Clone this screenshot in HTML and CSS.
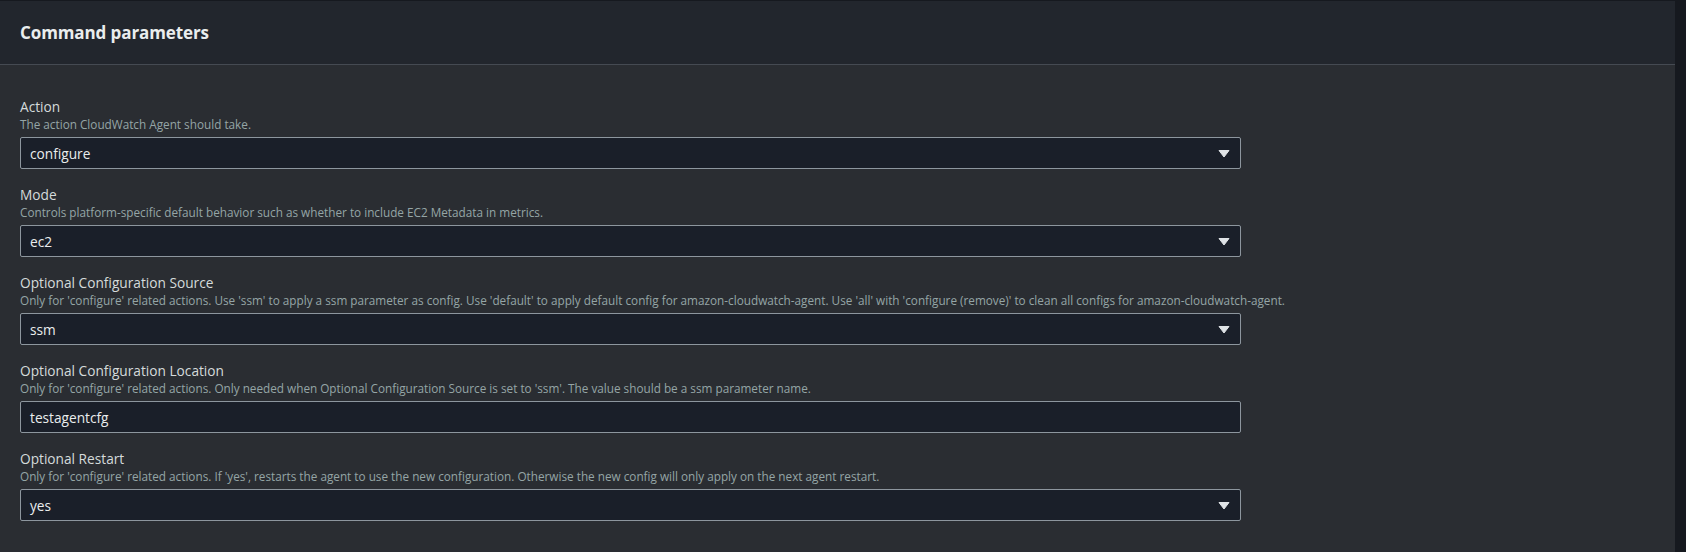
FILE: index.html
```html
<!DOCTYPE html>
<html lang="en">
<head>
<meta charset="utf-8">
<title>Command parameters</title>
<link rel="stylesheet" href="styles.css">
</head>
<body>
<div class="page">
  <section class="panel">
    <header class="panel-header">
      <h2 class="panel-title">Command parameters</h2>
    </header>
    <div class="panel-body">
      <div class="field">
        <div class="field-label">Action</div>
        <div class="field-desc">The action CloudWatch Agent should take.</div>
        <div class="control select">
          <span class="value">configure</span>
          <svg class="caret" width="12" height="9" viewBox="0 0 12 9"><path d="M1 1.5h10L6 8z" fill="currentColor" stroke="currentColor" stroke-width="1" stroke-linejoin="round"/></svg>
        </div>
      </div>
      <div class="field">
        <div class="field-label">Mode</div>
        <div class="field-desc">Controls platform-specific default behavior such as whether to include EC2 Metadata in metrics.</div>
        <div class="control select">
          <span class="value">ec2</span>
          <svg class="caret" width="12" height="9" viewBox="0 0 12 9"><path d="M1 1.5h10L6 8z" fill="currentColor" stroke="currentColor" stroke-width="1" stroke-linejoin="round"/></svg>
        </div>
      </div>
      <div class="field">
        <div class="field-label">Optional Configuration Source</div>
        <div class="field-desc">Only for 'configure' related actions. Use 'ssm' to apply a ssm parameter as config. Use 'default' to apply default config for amazon-cloudwatch-agent. Use 'all' with 'configure (remove)' to clean all configs for amazon-cloudwatch-agent.</div>
        <div class="control select">
          <span class="value">ssm</span>
          <svg class="caret" width="12" height="9" viewBox="0 0 12 9"><path d="M1 1.5h10L6 8z" fill="currentColor" stroke="currentColor" stroke-width="1" stroke-linejoin="round"/></svg>
        </div>
      </div>
      <div class="field">
        <div class="field-label">Optional Configuration Location</div>
        <div class="field-desc">Only for 'configure' related actions. Only needed when Optional Configuration Source is set to 'ssm'. The value should be a ssm parameter name.</div>
        <div class="control">
          <span class="value">testagentcfg</span>
        </div>
      </div>
      <div class="field">
        <div class="field-label">Optional Restart</div>
        <div class="field-desc">Only for 'configure' related actions. If 'yes', restarts the agent to use the new configuration. Otherwise the new config will only apply on the next agent restart.</div>
        <div class="control select">
          <span class="value">yes</span>
          <svg class="caret" width="12" height="9" viewBox="0 0 12 9"><path d="M1 1.5h10L6 8z" fill="currentColor" stroke="currentColor" stroke-width="1" stroke-linejoin="round"/></svg>
        </div>
      </div>
    </div>
  </section>
  <div class="gutter"></div>
</div>
</body>
</html>
```

FILE: styles.css
```css
html, body {
  margin: 0;
  padding: 0;
  background: #16191f;
  height: 100%;
}
body {
  font-family: "Open Sans", "Noto Sans", "Liberation Sans", sans-serif;
  color: #d5dbdb;
  overflow: hidden;
}
.page {
  display: flex;
  height: 552px;
}
.panel {
  width: 1675px;
  flex: none;
  border-top: 1px solid #16191f;
  background: #2a2d32;
  display: flex;
  flex-direction: column;
}
.gutter {
  flex: 1;
  background: #16191f;
}
.panel-header {
  box-sizing: border-box;
  height: 64px;
  background: #22262d;
  border-bottom: 1px solid #454a52;
  display: flex;
  align-items: center;
  padding: 0 20px 1px;
}
.panel-title {
  margin: 0;
  font-size: 17px;
  font-weight: 700;
  color: #eaeded;
  letter-spacing: -0.1px;
}
.panel-body {
  padding: 32px 20px 0;
  display: flex;
  flex-direction: column;
  gap: 16px;
}
.field {
  display: flex;
  flex-direction: column;
}
.field-label {
  font-size: 13.7px;
  line-height: 19px;
  color: #d5dbdb;
}
.field-desc {
  font-size: 11.75px;
  line-height: 16px;
  color: #95a5a6;
  margin-bottom: 5px;
  white-space: nowrap;
}
.control {
  box-sizing: border-box;
  width: 1221px;
  height: 32px;
  background: #1a1f29;
  border: 1px solid #8d969e;
  border-radius: 2px;
  display: flex;
  align-items: center;
  padding: 0 10px 0 9px;
}
.value {
  flex: 1;
  font-size: 13.7px;
  color: #eaeded;
}
.caret {
  color: #dfe3e6;
  flex: none;
}
```
